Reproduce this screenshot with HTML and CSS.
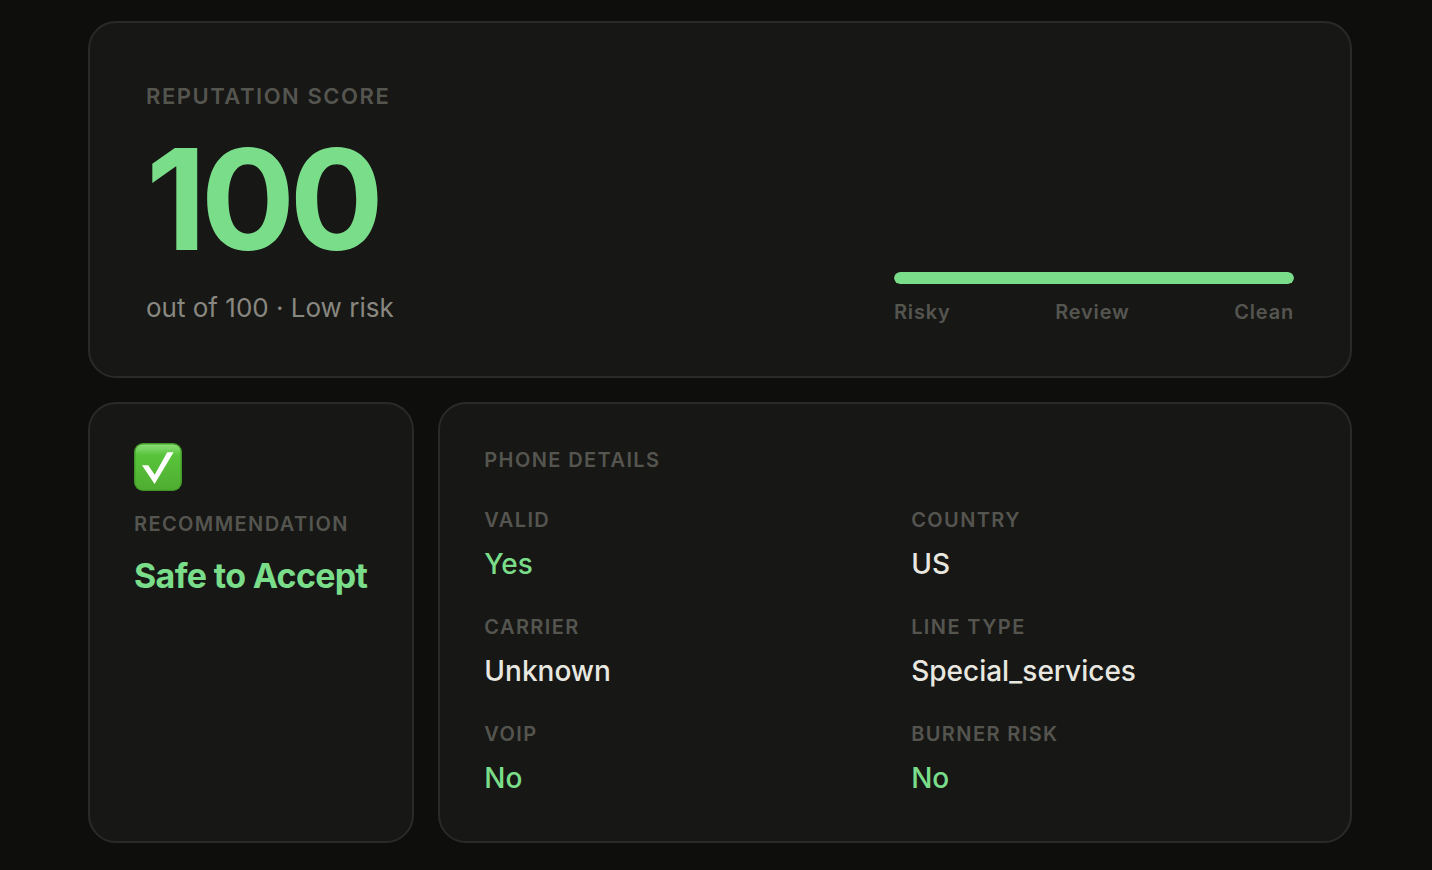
FILE: index.html
```html
<!DOCTYPE html>
<html lang="en">
<head>
<meta charset="utf-8">
<meta name="viewport" content="width=device-width, initial-scale=1">
<title>Phone reputation</title>
<link rel="stylesheet" href="styles.css">
</head>
<body>
<main class="results">
  <section class="card score-card">
    <div class="score">
      <h1 class="label label-large">Reputation score</h1>
      <p class="score-value">100</p>
      <p class="score-note">out of 100 · Low risk</p>
    </div>
    <div class="meter">
      <div class="meter-track"><div class="meter-fill" style="width: 100%"></div></div>
      <div class="meter-scale"><span>Risky</span><span>Review</span><span>Clean</span></div>
    </div>
  </section>
  <div class="columns">
    <section class="card panel">
      <svg class="check" viewBox="0 0 48 48" aria-hidden="true">
        <defs>
          <linearGradient id="face" x1="0" y1="0" x2="0" y2="1">
            <stop offset="0" stop-color="#8ade74"/>
            <stop offset="0.1" stop-color="#7ad463"/>
            <stop offset="0.24" stop-color="#58c43b"/>
            <stop offset="1" stop-color="#4fad31"/>
          </linearGradient>
        </defs>
        <rect x="0" y="0" width="48" height="48" rx="9" fill="#3d9126"/>
        <rect x="1" y="1" width="46" height="46" rx="8" fill="url(#face)" stroke="#46a02c" stroke-width="1"/>
        <path d="M8 22.2h6.2l6.5 9.6L33.2 9.2h6.4L20.6 41z" fill="#fff"/>
      </svg>
      <h2 class="label">Recommendation</h2>
      <p class="verdict">Safe to Accept</p>
    </section>
    <section class="card panel">
      <h2 class="label panel-title">Phone details</h2>
      <dl class="details">
        <div><dt class="label">Valid</dt><dd class="good">Yes</dd></div>
        <div><dt class="label">Country</dt><dd>US</dd></div>
        <div><dt class="label">Carrier</dt><dd>Unknown</dd></div>
        <div><dt class="label">Line type</dt><dd>Special_services</dd></div>
        <div><dt class="label">VoIP</dt><dd class="good">No</dd></div>
        <div><dt class="label">Burner risk</dt><dd class="good">No</dd></div>
      </dl>
    </section>
  </div>
</main>
</body>
</html>
```
FILE: styles.css
```css
* { box-sizing: border-box; }

body {
  margin: 0;
  background: #0e0e0c;
  color: #e8e8e0;
  font-family: Inter, "Liberation Sans", sans-serif;
}

h1, h2, p, dl, dd { margin: 0; }

.results {
  display: flex;
  flex-direction: column;
  gap: 24px;
  padding: 21px 80px 24px 88px;
}

.card {
  background: #171715;
  border: 2px solid #2a2a28;
  border-radius: 28px;
}

.score-card {
  display: flex;
  justify-content: space-between;
  align-items: flex-end;
  gap: 48px;
  padding: 56px 56px 52px;
}

.label {
  color: #555550;
  font-size: 20px;
  font-weight: 600;
  line-height: 24px;
  letter-spacing: 0.07em;
  text-transform: uppercase;
}

.label-large {
  font-size: 22px;
  line-height: 34px;
}

.score-value {
  margin: 16px 0 23px;
  color: #7add8a;
  font-size: 140px;
  font-weight: 700;
  line-height: 140px;
  letter-spacing: -0.04em;
}

.score-note {
  color: #888880;
  font-size: 26px;
  line-height: 32px;
}

.meter { flex: 0 1 400px; }

.meter-track {
  height: 12px;
  border-radius: 6px;
  background: #2a2a28;
  overflow: hidden;
}

.meter-fill {
  height: 100%;
  border-radius: 6px;
  background: #7add8a;
}

.meter-scale {
  display: flex;
  justify-content: space-between;
  margin-top: 16px;
  color: #555550;
  font-size: 20px;
  font-weight: 600;
  line-height: 24px;
  letter-spacing: 0.04em;
}

.columns {
  display: grid;
  grid-template-columns: 5fr 14fr;
  gap: 24px;
}

.panel { padding: 39px 44px 46px; }

.check {
  display: block;
  width: 48px;
  height: 48px;
  margin-bottom: 21px;
}

.verdict {
  margin-top: 20px;
  color: #7add8a;
  font-size: 34px;
  font-weight: 700;
  line-height: 40px;
  letter-spacing: -0.02em;
  white-space: nowrap;
}

.panel-title {
  margin: 5px 0 36px;
}

.details {
  display: grid;
  grid-template-columns: 1fr 1fr;
  gap: 34px 32px;
}

.details dd {
  margin-top: 15px;
  font-size: 28px;
  font-weight: 500;
  line-height: 34px;
}

.details .good { color: #7add8a; }
```
